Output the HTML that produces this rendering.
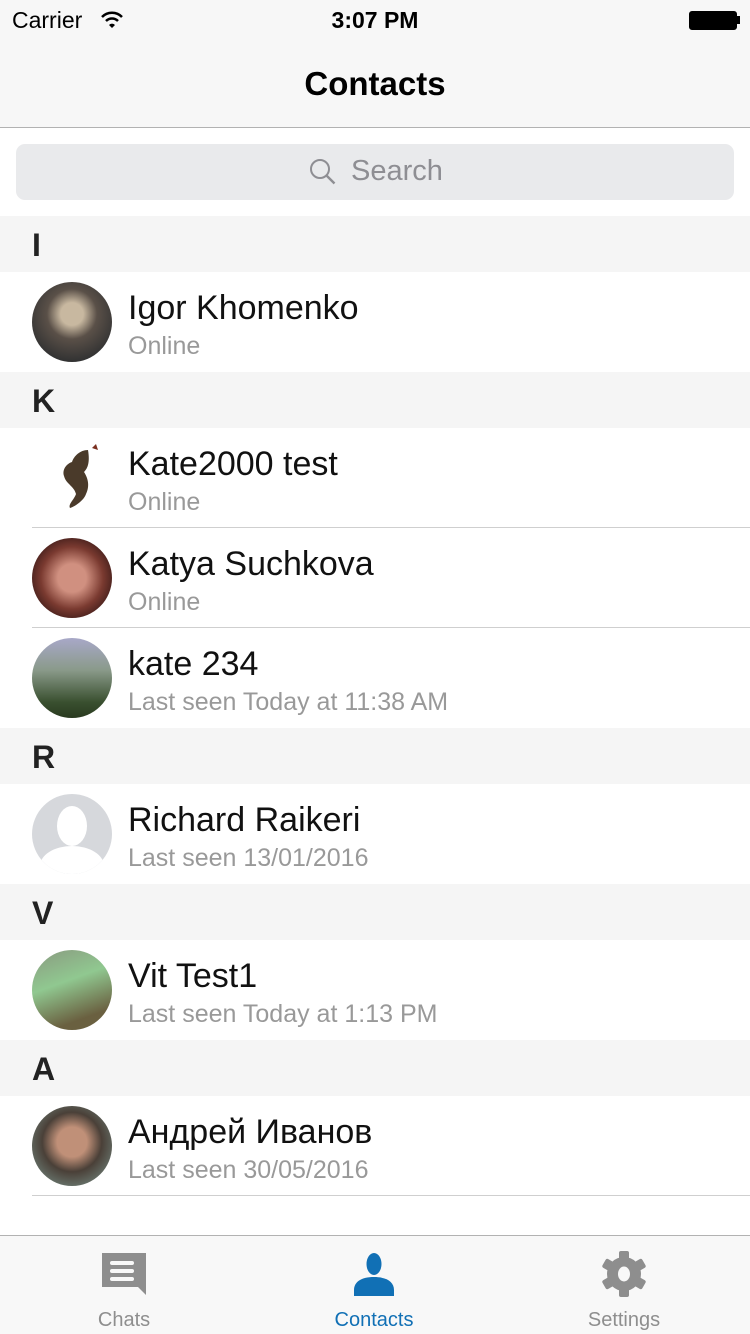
<!DOCTYPE html>
<html><head><meta charset="utf-8"><style>
*{margin:0;padding:0;box-sizing:border-box}
body{width:750px;height:1334px;background:#fff;font-family:"Liberation Sans","Noto Sans CJK SC",sans-serif;position:relative;overflow:hidden}
.abs{position:absolute}
.hdr{position:absolute;left:0;width:750px;height:56px;background:#f5f5f5;font-size:32px;font-weight:bold;color:#222;padding-left:32px;line-height:58px}
.row{position:absolute;left:0;width:750px;height:100px}
.av{position:absolute;left:32px;top:10px;width:80px;height:80px;border-radius:50%}
.nm{position:absolute;left:128px;top:17px;font-size:34px;color:#111}
.st{position:absolute;left:128px;top:60px;font-size:25px;color:#999}
.sep{position:absolute;left:32px;right:0;height:1px;background:#cfcfcf}
</style></head><body>
<div class="abs" style="left:0;top:0;width:750px;height:128px;background:#f7f7f7;border-bottom:1px solid #b2b2b2"></div>
<div class="abs" style="left:12px;top:7px;font-size:23px;color:#000">Carrier</div>
<svg class="abs" style="left:100px;top:10px" width="24" height="20" viewBox="0 0 24 20"><path d="M2 7a14 14 0 0 1 20 0" stroke="#000" stroke-width="2.5" fill="none"/><path d="M6 11a8.5 8.5 0 0 1 12 0" stroke="#000" stroke-width="2.5" fill="none"/><path d="M9 15l3 3 3-3a4 4 0 0 0-6 0z" fill="#000"/></svg>
<div class="abs" style="left:0;width:750px;top:7px;text-align:center;font-size:23px;font-weight:bold">3:07 PM</div>
<div class="abs" style="left:689px;top:11px;width:48px;height:19px;border:2px solid #000;border-radius:3px;background:#000"></div>
<div class="abs" style="left:737px;top:16px;width:3px;height:8px;background:#000"></div>
<div class="abs" style="left:0;width:750px;top:65px;text-align:center;font-size:33px;font-weight:bold">Contacts</div>
<div class="abs" style="left:16px;top:144px;width:718px;height:56px;background:#e9eaec;border-radius:9px"></div>
<svg class="abs" style="left:308px;top:157px" width="30" height="30" viewBox="0 0 30 30"><circle cx="12" cy="12" r="9" stroke="#8e8e93" stroke-width="2" fill="none"/><path d="M18.5 18.5l8 8" stroke="#8e8e93" stroke-width="2.4"/></svg>
<div class="abs" style="left:351px;top:155px;font-size:29px;color:#8e8e93">Search</div>

<div class="hdr" style="top:216px">I</div>
<div class="row" style="top:272px"><div class="av" style="background:radial-gradient(circle at 50% 40%,#c8b8a0 0 18%,#5a5048 40%,#333 75%)"></div><div class="nm">Igor Khomenko</div><div class="st">Online</div></div>
<div class="hdr" style="top:372px">K</div>
<div class="row" style="top:428px"><div class="av" style="background:#fff"><svg width="80" height="80" viewBox="0 0 80 80"><path d="M56 12c-8 0-14 6-16 12-6 2-10 8-8 14 2 8 10 10 12 18-2 6-8 10-6 14 6-2 14-8 16-14 4-8 2-16-2-22 4-4 6-10 4-22z" fill="#4a3a2a"/><path d="M60 10l4-4 2 6z" fill="#7a3020"/></svg></div><div class="nm">Kate2000 test</div><div class="st">Online</div><div class="sep" style="top:99px"></div></div>
<div class="row" style="top:528px"><div class="av" style="background:radial-gradient(circle at 50% 50%,#d09080 0 25%,#7a3a30 55%,#3a1a18 80%)"></div><div class="nm">Katya Suchkova</div><div class="st">Online</div><div class="sep" style="top:99px"></div></div>
<div class="row" style="top:628px"><div class="av" style="background:linear-gradient(180deg,#a8a8c8 0%,#8a9a8a 40%,#3a5030 80%,#2a3a20 100%)"></div><div class="nm">kate 234</div><div class="st">Last seen Today at 11:38 AM</div></div>
<div class="hdr" style="top:728px">R</div>
<div class="row" style="top:784px"><div class="av" style="background:#d6d8dc;overflow:hidden"><div style="position:absolute;left:25px;top:12px;width:30px;height:40px;border-radius:50%;background:#fff"></div><div style="position:absolute;left:8px;top:52px;width:64px;height:40px;border-radius:50% 50% 0 0;background:#fff"></div></div><div class="nm">Richard Raikeri</div><div class="st">Last seen 13/01/2016</div></div>
<div class="hdr" style="top:884px">V</div>
<div class="row" style="top:940px"><div class="av" style="background:linear-gradient(160deg,#8a9a80 0%,#90c890 40%,#6a6040 80%)"></div><div class="nm">Vit Test1</div><div class="st">Last seen Today at 1:13 PM</div></div>
<div class="hdr" style="top:1040px">A</div>
<div class="row" style="top:1096px"><div class="av" style="background:radial-gradient(circle at 50% 45%,#c09078 0 25%,#4a4038 50%,#6a7870 80%)"></div><div class="nm">Андрей Иванов</div><div class="st">Last seen 30/05/2016</div><div class="sep" style="top:99px"></div></div>

<div class="abs" style="left:0;top:1235px;width:750px;height:99px;background:#f8f8f8;border-top:1px solid #b2b2b2"></div>
<svg class="abs" style="left:100px;top:1251px" width="48" height="46" viewBox="0 0 48 46"><path d="M2 2h44v42l-8-8H2z" fill="#8e8e8e"/><rect x="10" y="10" width="24" height="4" rx="2" fill="#f8f8f8"/><rect x="10" y="18" width="24" height="4" rx="2" fill="#f8f8f8"/><rect x="10" y="26" width="24" height="4" rx="2" fill="#f8f8f8"/></svg>
<svg class="abs" style="left:350px;top:1252px" width="48" height="46" viewBox="0 0 48 46"><ellipse cx="24" cy="12" rx="7.5" ry="11" fill="#1170b5"/><path d="M4 44v-6c0-8 7-13 20-13s20 5 20 13v6z" fill="#1170b5"/></svg>
<svg class="abs" style="left:598px;top:1248px" width="52" height="52" viewBox="0 0 52 52"><g fill="#8e8e8e"><circle cx="26" cy="26" r="17"/><rect x="21" y="3" width="10" height="46" rx="2"/><rect x="21" y="3" width="10" height="46" rx="2" transform="rotate(60 26 26)"/><rect x="21" y="3" width="10" height="46" rx="2" transform="rotate(120 26 26)"/></g><ellipse cx="26" cy="26" rx="6" ry="7.5" fill="#f8f8f8"/></svg>
<div class="abs" style="left:74px;width:100px;top:1309px;text-align:center;font-size:20px;color:#8e8e8e">Chats</div>
<div class="abs" style="left:314px;width:120px;top:1309px;text-align:center;font-size:20px;color:#1170b5">Contacts</div>
<div class="abs" style="left:564px;width:120px;top:1309px;text-align:center;font-size:20px;color:#8e8e8e">Settings</div>
</body></html>
